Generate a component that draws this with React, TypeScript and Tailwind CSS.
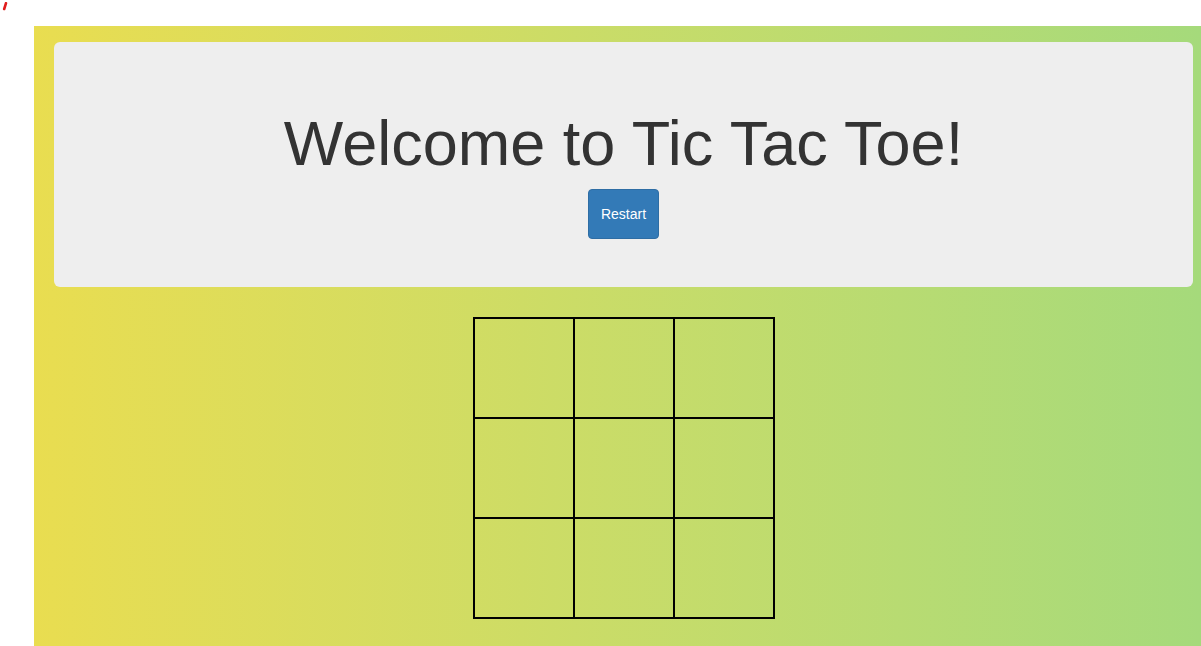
import React, { useState } from 'react';

const App: React.FC = () => {
  const [cells, setCells] = useState<string[]>(Array(9).fill(''));

  const restart = () => setCells(Array(9).fill(''));

  return (
    <div className="min-h-screen bg-white" style={{ fontFamily: '"Liberation Sans", Arial, sans-serif' }}>
      {/* top strip with the little red mark */}
      <div className="h-[26px] pl-[1px] pt-[2px]">
        <svg width="8" height="9" viewBox="0 0 8 9">
          <path d="M5 1.2 L3.2 7" stroke="#e11d1d" strokeWidth="2.6" strokeLinecap="round" />
        </svg>
      </div>

      <div className="flex pl-[34px]">
        <div className="flex-1 h-[620px] bg-gradient-to-r from-[#e9dd50] to-[#a5da7b] pl-[20px] pr-[8px] pt-[16px]">
          {/* Jumbotron */}
          <div className="bg-[#eeeeee] rounded-[6px] h-[245px] pt-[67px] flex flex-col items-center">
            <h1 className="text-[63px] leading-[1.1] text-[#333333]">Welcome to Tic Tac Toe!</h1>
            <button
              onClick={restart}
              className="mt-[11px] w-[71px] h-[50px] bg-[#337ab7] border border-[#2e6da4] rounded-[4px] text-white text-[14px]"
            >
              Restart
            </button>
          </div>

          {/* Board */}
          <div className="flex justify-center mt-[30px] pl-[1px]">
            <div className="grid grid-cols-3 w-[302px] border-t-2 border-l-2 border-black">
              {cells.map((c, i) => (
                <button
                  key={i}
                  onClick={() =>
                    setCells((prev) => prev.map((v, j) => (j === i && !v ? 'X' : v)))
                  }
                  className="w-[100px] h-[100px] border-r-2 border-b-2 border-black text-[48px] text-[#333333]"
                >
                  {c}
                </button>
              ))}
            </div>
          </div>
        </div>
      </div>
    </div>
  );
};

export default App;
